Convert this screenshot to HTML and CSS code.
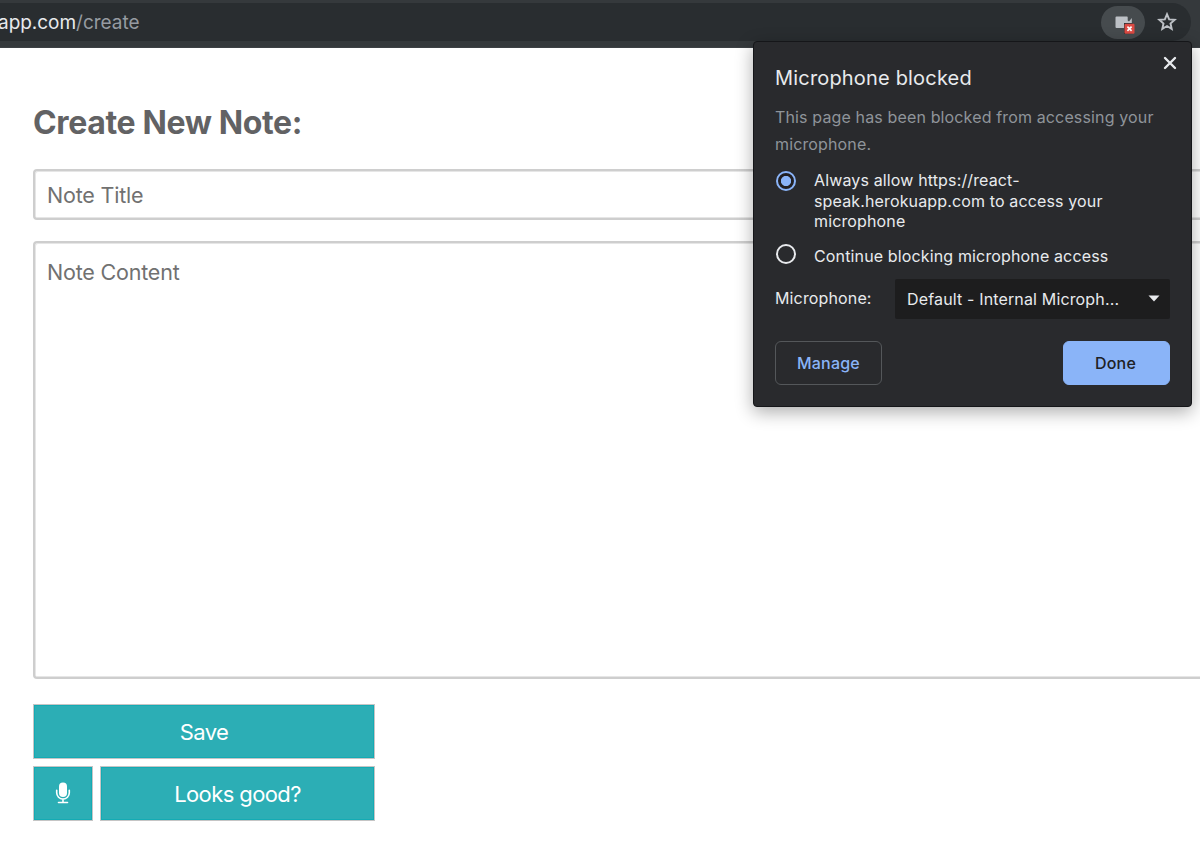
FILE: index.html
```html
<!DOCTYPE html>
<html lang="en">
<head>
<meta charset="utf-8">
<title>Create New Note</title>
<link rel="stylesheet" href="styles.css">
</head>
<body>
<header class="toolbar">
  <div class="omnibox">
    <div class="url"><span class="host">app.com</span><span class="path">/create</span></div>
    <div class="camera">
      <svg width="24" height="20" viewBox="0 0 24 20"><path d="M1.500 1.500H12q.7 0 .7.700V5.500l1.300 1 2.800-3.500V13H1.500q-1 0-1-1V2.500q0-1 1-1z" fill="#bdc1c6"/><path d="M9 8h8.500v11H9z" fill="#2d3336"/><rect x="9.500" y="8.800" width="10" height="10" rx="1.200" fill="#dc4a43"/><path d="M12.400 11.700l4.200 4.200m0-4.200l-4.200 4.200" stroke="#fff" stroke-width="1.700"/></svg>
    </div>
    <svg class="star" width="20" height="20" viewBox="0 0 20 20"><path d="M10 2.200l2.150 5.150 5.550.48-4.200 3.650 1.250 5.450L10 14.050l-4.750 2.880 1.250-5.450-4.200-3.650 5.550-.48z" fill="none" stroke="#bdc1c6" stroke-width="1.900"/></svg>
  </div>
</header>
<main class="page">
  <h1 class="heading">Create New Note:</h1>
  <div class="field title-field">Note Title</div>
  <div class="field content-field">Note Content</div>
  <div class="actions">
    <button class="btn save">Save</button>
    <button class="btn mic" aria-label="Record">
      <svg width="16" height="22" viewBox="0 0 16 22"><rect x="4" y="0.500" width="8" height="14.500" rx="4" fill="#fff"/><path d="M1.700 8.300v2.500a6.300 6.300 0 0 0 12.600 0V8.300M8 17v3.500M3.500 20.500h9" fill="none" stroke="#fff" stroke-width="1.600" stroke-linecap="round"/></svg>
    </button>
    <button class="btn good">Looks good?</button>
  </div>
</main>
<section class="popup">
  <svg class="close" width="14" height="14" viewBox="0 0 14 14"><path d="M2 2l10 10M12 2L2 12" stroke="#e8eaed" stroke-width="2.400" stroke-linecap="round"/></svg>
  <h2 class="popup-title">Microphone blocked</h2>
  <p class="popup-text">This page has been blocked from accessing your<br>microphone.</p>
  <div class="option allow">
    <span class="radio checked"></span>
    <span class="label">Always allow https://react-<br>speak.herokuapp.com to access your<br>microphone</span>
  </div>
  <div class="option block">
    <span class="radio"></span>
    <span class="label">Continue blocking microphone access</span>
  </div>
  <div class="device">
    <span class="device-label">Microphone:</span>
    <div class="select"><span class="select-text">Default - Internal Microph...</span><svg width="12" height="7" viewBox="0 0 12 7"><path d="M.5.500h11L6 6.500z" fill="#e8eaed"/></svg></div>
  </div>
  <div class="popup-actions">
    <button class="pbtn manage">Manage</button>
    <button class="pbtn done">Done</button>
  </div>
</section>
</body>
</html>
```

FILE: styles.css
```css
* { box-sizing: border-box; }
body {
  margin: 0;
  height: 855px;
  overflow: hidden;
  position: relative;
  background: #fff;
  font-family: Inter, "Liberation Sans", sans-serif;
}
button { font-family: inherit; padding: 0; margin: 0; }
.toolbar {
  height: 48px;
  padding: 3px 9px 0 0;
  background: #35393c;
  border-bottom: 1px solid #3d4145;
}
.omnibox {
  height: 38px;
  display: flex;
  align-items: center;
  padding-right: 14px;
  background: #292d30;
  border-radius: 0 19px 19px 0;
}
.url {
  flex: 1;
  margin: 2px 0 0 -2px;
  font-size: 19px;
  line-height: 24px;
  letter-spacing: -0.03px;
  white-space: nowrap;
}
.host { color: #e8eaed; }
.path { color: #969ba1; }
.camera {
  width: 44px;
  height: 33px;
  margin-right: 12px;
  padding: 9px 0 0 14px;
  border-radius: 17px;
  background: #464b4e;
}
.camera svg, .star { display: block; }
.page { padding: 55px 0 0 33px; }
.heading {
  margin: 0 0 26px;
  font-size: 32px;
  line-height: 40px;
  font-weight: 700;
  letter-spacing: -0.36px;
  color: #626264;
}
.field {
  border: 2px solid #cecece;
  border-right: 0;
  border-radius: 4px 0 0 4px;
  box-shadow: inset 1px 1px 0 #e6e6e6, inset 0 -1px 0 #e6e6e6;
  padding: 0 12px;
  font-size: 21.500px;
  letter-spacing: -0.2px;
  color: #717171;
}
.title-field { height: 51px; line-height: 48px; }
.content-field { height: 438px; margin-top: 21px; padding-top: 16px; line-height: 26px; }
.actions {
  width: 342px;
  margin-top: 25px;
  display: grid;
  grid-template-columns: 60px 275px;
  gap: 7px;
}
.btn {
  height: 55px;
  border: 1px solid #c5c5c5;
  border-radius: 0;
  background: #2caeb5;
  box-shadow: inset 0 0 0 1px #14abb4;
  color: #fff;
  font-size: 22px;
  letter-spacing: -0.6px;
}
.save { grid-column: 1 / 3; }
.mic { display: flex; align-items: center; justify-content: center; padding-bottom: 2px; }
.popup {
  position: absolute;
  left: 753px;
  top: 41px;
  width: 439px;
  height: 366px;
  padding: 23px 21px 0;
  background: #292a2d;
  border: 1px solid #151619;
  border-radius: 4px;
  box-shadow: 0 5px 18px rgba(0, 0, 0, .33);
  color: #e8eaed;
  font-size: 16px;
  letter-spacing: 0.14px;
}
.close { position: absolute; right: 14px; top: 14px; }
.popup-title { margin: 0; font-size: 20px; line-height: 26px; font-weight: 400; letter-spacing: 0.18px; }
.popup-text { margin: 13px 0 0; line-height: 27px; color: #8f949a; white-space: nowrap; }
.option { display: flex; gap: 18px; padding-left: 1px; white-space: nowrap; }
.allow { margin-top: 12px; line-height: 20.500px; }
.allow .radio { margin-top: 1px; }
.block { margin-top: 13px; line-height: 22px; }
.block .radio { margin-top: -1px; }
.radio {
  flex: none;
  width: 20px;
  height: 20px;
  border: 2px solid #e8eaed;
  border-radius: 50%;
}
.checked { border-color: #8ab4f8; background: radial-gradient(circle, #8ab4f8 4.700px, #211f22 5.500px); }
.device { display: flex; align-items: center; justify-content: space-between; margin-top: 12px; }
.device-label { margin-top: -2px; }
.select {
  width: 275px;
  height: 40px;
  padding: 1px 10px 0 12px;
  display: flex;
  align-items: center;
  justify-content: space-between;
  background: #1d1d1e;
  border-radius: 2px;
}
.select-text { letter-spacing: 0.15px; }
.select svg { margin-top: -2px; }
.popup-actions { display: flex; justify-content: space-between; margin-top: 22px; }
.pbtn { width: 107px; height: 44px; border-radius: 6px; font-size: 16px; font-weight: 500; letter-spacing: 0.2px; }
.manage { background: transparent; border: 1px solid #54575a; color: #8ab4f8; }
.done { background: #8ab4f8; border: 1px solid #8ab4f8; color: #202124; padding-right: 2px; }
```
